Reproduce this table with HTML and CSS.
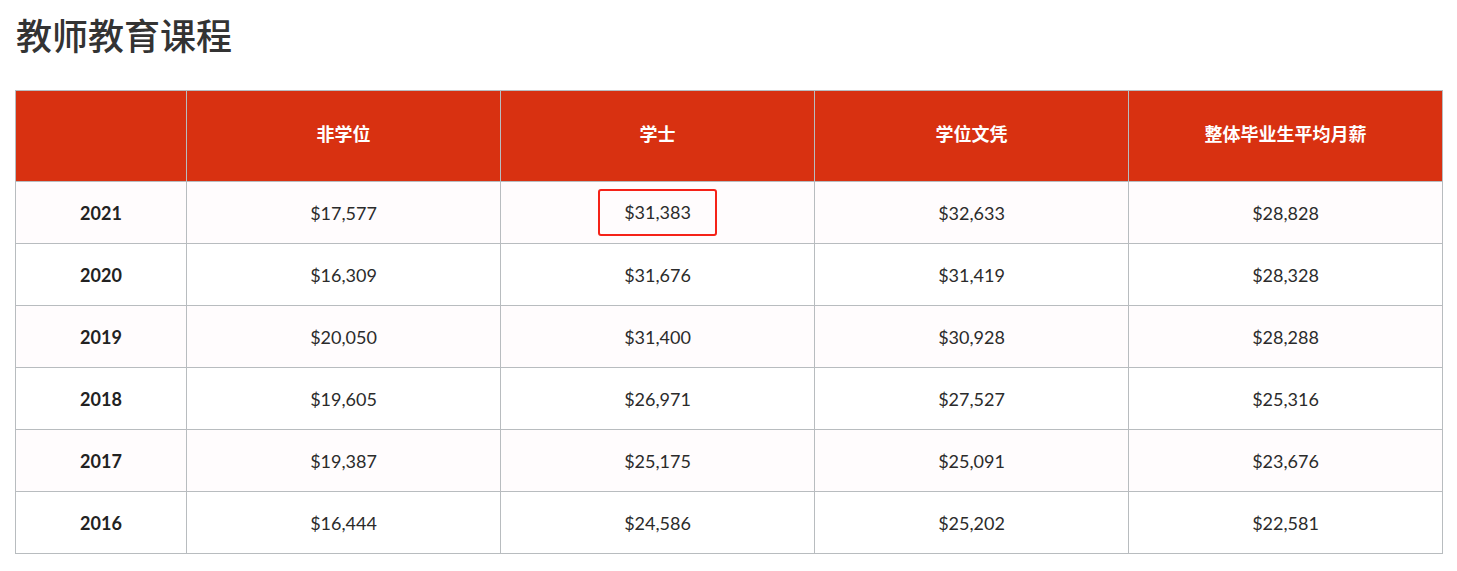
FILE: index.html
```html
<!DOCTYPE html>
<html lang="zh">
<head>
<meta charset="utf-8">
<link rel="stylesheet" href="styles.css">
</head>
<body>
<h1 class="title">教师教育课程</h1>
<table class="salary">
  <thead>
    <tr>
      <th class="col-year"></th>
      <th>非学位</th>
      <th>学士</th>
      <th>学位文凭</th>
      <th>整体毕业生平均月薪</th>
    </tr>
  </thead>
  <tbody>
    <tr class="odd"><td class="year">2021</td><td>$17,577</td><td><span class="mark">$31,383</span></td><td>$32,633</td><td>$28,828</td></tr>
    <tr><td class="year">2020</td><td>$16,309</td><td>$31,676</td><td>$31,419</td><td>$28,328</td></tr>
    <tr class="odd"><td class="year">2019</td><td>$20,050</td><td>$31,400</td><td>$30,928</td><td>$28,288</td></tr>
    <tr><td class="year">2018</td><td>$19,605</td><td>$26,971</td><td>$27,527</td><td>$25,316</td></tr>
    <tr class="odd"><td class="year">2017</td><td>$19,387</td><td>$25,175</td><td>$25,091</td><td>$23,676</td></tr>
    <tr><td class="year">2016</td><td>$16,444</td><td>$24,586</td><td>$25,202</td><td>$22,581</td></tr>
  </tbody>
</table>
</body>
</html>
```
FILE: styles.css
```css
html, body {
  margin: 0;
  padding: 0;
  background: #ffffff;
}
body {
  padding: 0 14px 0 15px;
  font-family: Lato, "Noto Sans CJK SC", sans-serif;
  color: #2b2b2b;
}
.title {
  margin: 0;
  padding-top: 12px;
  height: 90px;
  box-sizing: border-box;
  font-family: "Noto Sans CJK SC", sans-serif;
  font-size: 36px;
  font-weight: 500;
  line-height: 44px;
  color: #333333;
  padding-left: 1px;
}
.salary {
  width: 1428px;
  border-collapse: collapse;
  table-layout: fixed;
}
.salary th, .salary td {
  border: 1px solid #b8bcbf;
  text-align: center;
  padding: 0;
}
.salary th {
  background: #d83111;
  color: #ffffff;
  height: 84px;
  padding-bottom: 6px;
  font-family: Lato, "Noto Sans CJK SC", sans-serif;
  font-size: 18px;
  font-weight: 700;
}
.salary th.col-year {
  width: 170px;
}
.salary td {
  height: 61px;
  font-size: 18px;
  color: #2b2b2b;
}
.salary tr.odd td {
  background: #fffcfd;
}
.salary td.year {
  font-weight: 700;
  color: #222222;
}
.mark {
  display: inline-block;
  padding: 11px 24px;
  border: 2px solid #f52218;
  border-radius: 3px;
  line-height: 21px;
}
```
